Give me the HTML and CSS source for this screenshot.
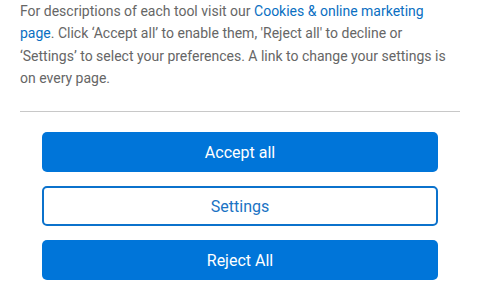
FILE: index.html
```html
<!DOCTYPE html>
<html>
<head>
<meta charset="utf-8">
<link rel="stylesheet" href="styles.css">
</head>
<body>
<div class="panel">
  <p class="desc">For descriptions of each tool visit our <a class="link" href="#">Cookies &amp; online marketing page</a>. Click ‘Accept all’ to enable them, 'Reject all' to decline or ‘Settings’ to select your preferences. A link to change your settings is on every page.</p>
  <hr class="divider">
  <div class="actions">
    <button class="btn btn-primary">Accept all</button>
    <button class="btn btn-outline">Settings</button>
    <button class="btn btn-primary">Reject All</button>
  </div>
</div>
</body>
</html>
```
FILE: styles.css
```css
html, body {
  margin: 0;
  padding: 0;
  background: #fff;
}
body {
  font-family: Roboto, "Liberation Sans", sans-serif;
}
.panel {
  width: 440px;
  padding: 0 20px;
}
.desc {
  margin: 0;
  font-size: 14px;
  line-height: 22.3px;
  color: #666;
}
.link {
  color: #0a6fc2;
  text-decoration: none;
}
.divider {
  margin: 22px 0 0;
  border: 0;
  border-top: 1px solid #c8c8c8;
  height: 0;
}
.actions {
  display: flex;
  flex-direction: column;
  gap: 14px;
  padding: 20px 22px 0;
}
.btn {
  height: 40px;
  border-radius: 5px;
  font-family: Roboto, "Liberation Sans", sans-serif;
  font-size: 16px;
  cursor: pointer;
}
.btn-primary {
  background: #0075d9;
  border: 0;
  color: #fff;
}
.btn-outline {
  background: #fff;
  border: 2px solid #0b72cc;
  color: #1a73c4;
}
```
